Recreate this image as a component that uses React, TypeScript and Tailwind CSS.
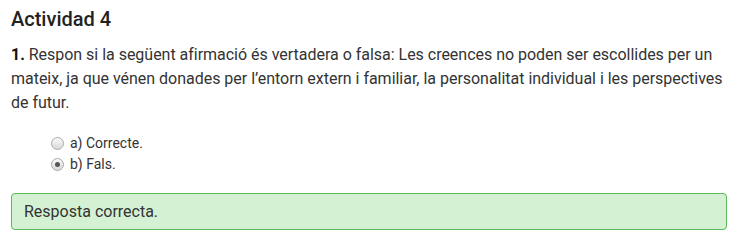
export default function App() {
  return (
    <div className="min-h-[245px] bg-white pl-[11px] pr-[8px] pt-[7px] text-[#333] [font-family:Roboto,'Liberation_Sans',sans-serif]">
      <h2 className="text-[20px] font-medium leading-[24px] text-[#222]">Actividad 4</h2>

      <p className="mt-[12px] mr-[-4px] text-[16px] leading-[24px] tracking-[-0.02px]">
        <span className="font-bold text-[#111]">1.</span> Respon si la següent afirmació és vertadera o falsa: Les
        creences no poden ser escollides per un mateix, ja que vénen donades per l’entorn extern i familiar, la
        personalitat individual i les perspectives de futur.
      </p>

      <div className="mt-[18px] flex flex-col pl-[40px] text-[14px] leading-[21px]">
        <Option label="a) Correcte." />
        <Option label="b) Fals." checked />
      </div>

      <div className="mt-[18px] rounded-[4px] border border-[#5cb85c] bg-[#d4f1d4] px-[12px] pt-[6px] pb-[5px] text-[16px] leading-[24px]">
        Resposta correcta.
      </div>
    </div>
  );
}

function Option({ label, checked = false }: { label: string; checked?: boolean }) {
  return (
    <label className="flex items-center gap-[6px]">
      <span className="flex h-[13px] w-[13px] items-center justify-center rounded-full border border-[#a9a9a9] bg-gradient-to-b from-[#fafafa] to-[#d9d9d9]">
        {checked && <span className="h-[5px] w-[5px] rounded-full bg-[#555]" />}
      </span>
      <span>{label}</span>
    </label>
  );
}
